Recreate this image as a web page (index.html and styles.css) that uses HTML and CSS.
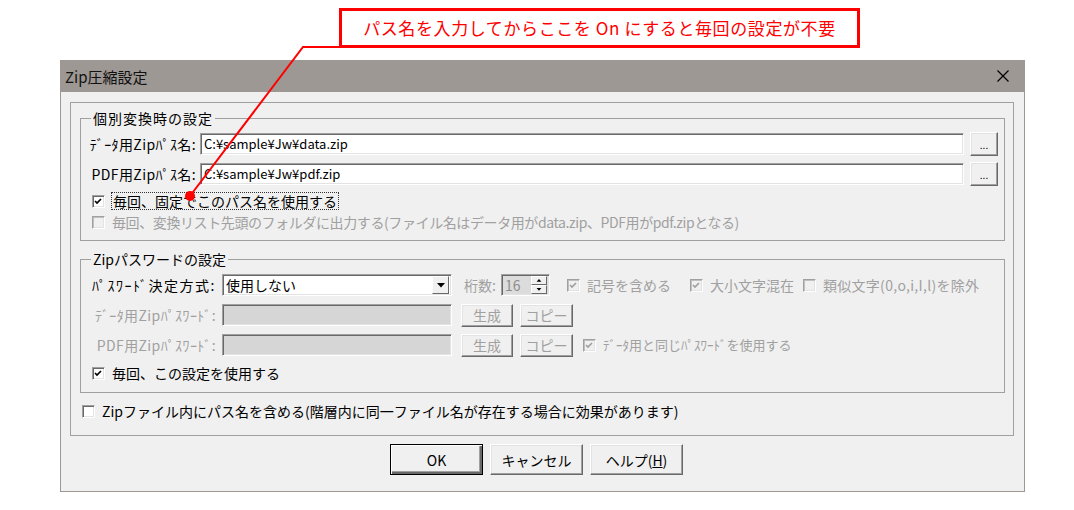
FILE: index.html
```html
<!DOCTYPE html>
<html lang="ja">
<head>
    <meta charset="UTF-8">
    <title>Zip圧縮設定</title>
    <link rel="stylesheet" href="styles.css">
</head>
<body>
<div class="page">
    <div class="note-row">
        <div class="note">パス名を入力してからここを On にすると毎回の設定が不要</div>
    </div>

    <div class="dialog">
        <div class="titlebar">
            <span>Zip圧縮設定</span>
            <svg class="close" viewBox="0 0 12 12"><path d="M0.5 0.5L11.5 11.5M11.5 0.5L0.5 11.5"/></svg>
        </div>

        <div class="body">
            <div class="frame">
                <fieldset class="group g-path">
                    <legend>個別変換時の設定</legend>
                    <div class="content">
                        <div class="row">
                            <span class="lbl">ﾃﾞｰﾀ用Zipﾊﾟｽ名:</span>
                            <div class="edit path">C:¥sample¥Jw¥data.zip</div>
                            <button class="btn browse">...</button>
                        </div>
                        <div class="row">
                            <span class="lbl">PDF用Zipﾊﾟｽ名:</span>
                            <div class="edit path">C:¥sample¥Jw¥pdf.zip</div>
                            <button class="btn browse">...</button>
                        </div>
                        <div class="check first">
                            <span class="cb"><svg viewBox="0 0 11 11"><path d="M2 5l2 2 4-4"/></svg></span>
                            <span class="cb-text focus">毎回、固定でこのパス名を使用する</span>
                        </div>
                        <div class="check second off">
                            <span class="cb"></span>
                            <span class="cb-text">毎回、変換リスト先頭のフォルダに出力する(ファイル名はデータ用がdata.zip、PDF用がpdf.zipとなる)</span>
                        </div>
                    </div>
                </fieldset>

                <fieldset class="group g-pass">
                    <legend>Zipパスワードの設定</legend>
                    <div class="content">
                        <div class="row">
                            <span class="lbl mode">ﾊﾟｽﾜｰﾄﾞ決定方式:</span>
                            <div class="edit select">
                                <span>使用しない</span>
                                <span class="drop"><svg viewBox="0 0 8 5"><path d="M0 0h8L4 4.5z"/></svg></span>
                            </div>
                            <span class="digits off">桁数:</span>
                            <div class="edit spin">
                                <span>16</span>
                                <span class="arrows">
                                    <svg viewBox="0 0 8 5"><path d="M0 4.5h8L4 0z"/></svg>
                                    <svg viewBox="0 0 8 5"><path d="M0 0h8L4 4.5z"/></svg>
                                </span>
                            </div>
                            <div class="check inline off sym">
                                <span class="cb"><svg viewBox="0 0 11 11"><path d="M2 5l2 2 4-4"/></svg></span>
                                <span class="cb-text">記号を含める</span>
                            </div>
                            <div class="check inline off mix">
                                <span class="cb"><svg viewBox="0 0 11 11"><path d="M2 5l2 2 4-4"/></svg></span>
                                <span class="cb-text">大小文字混在</span>
                            </div>
                            <div class="check inline off like">
                                <span class="cb"></span>
                                <span class="cb-text">類似文字(0,o,i,I,l)を除外</span>
                            </div>
                        </div>
                        <div class="row pw off">
                            <span class="lbl">ﾃﾞｰﾀ用Zipﾊﾟｽﾜｰﾄﾞ:</span>
                            <div class="edit blank"></div>
                            <button class="btn small make">生成</button>
                            <button class="btn small copy">コピー</button>
                        </div>
                        <div class="row pw off">
                            <span class="lbl">PDF用Zipﾊﾟｽﾜｰﾄﾞ:</span>
                            <div class="edit blank"></div>
                            <button class="btn small make">生成</button>
                            <button class="btn small copy">コピー</button>
                            <div class="check inline same">
                                <span class="cb"><svg viewBox="0 0 11 11"><path d="M2 5l2 2 4-4"/></svg></span>
                                <span class="cb-text">ﾃﾞｰﾀ用と同じﾊﾟｽﾜｰﾄﾞを使用する</span>
                            </div>
                        </div>
                        <div class="check every">
                            <span class="cb"><svg viewBox="0 0 11 11"><path d="M2 5l2 2 4-4"/></svg></span>
                            <span class="cb-text">毎回、この設定を使用する</span>
                        </div>
                    </div>
                </fieldset>

                <div class="check zip">
                    <span class="cb"></span>
                    <span class="cb-text">Zipファイル内にパス名を含める(階層内に同一ファイル名が存在する場合に効果があります)</span>
                </div>
            </div>

            <div class="actions">
                <button class="btn act ok">OK</button>
                <button class="btn act">キャンセル</button>
                <button class="btn act">ヘルプ(<u>H</u>)</button>
            </div>
        </div>
    </div>

    <svg class="pointer" viewBox="0 0 1074 510">
        <polyline points="340,47 303,47 190,196"/>
        <circle cx="190" cy="196" r="5"/>
    </svg>
</div>
</body>
</html>
```

FILE: styles.css
```css
* {
    box-sizing: border-box;
}

body {
    margin: 0;
    background: #fff;
    color: #000;
    font-family: "Noto Sans CJK JP", "Noto Sans", sans-serif;
    font-size: 14px;
}

.page {
    position: relative;
    width: 1074px;
    height: 510px;
}

/* callout */
.note-row {
    height: 60px;
    padding-top: 8px;
}

.note {
    margin-left: 339px;
    width: 521px;
    height: 40px;
    border: 3px solid #f00;
    color: #f00;
    font-size: 17px;
    letter-spacing: 0.6px;
    line-height: 33px;
    text-align: center;
}

.pointer {
    position: absolute;
    left: 0;
    top: 0;
    width: 1074px;
    height: 510px;
    pointer-events: none;
}

.pointer polyline {
    fill: none;
    stroke: #f00;
    stroke-width: 2;
}

.pointer circle {
    fill: #f00;
}

/* window */
.dialog {
    margin-left: 60px;
    width: 965px;
    height: 432px;
    background: #f0f0f0;
    border: 1px solid #9d9893;
    border-top: 0;
}

.titlebar {
    height: 32px;
    background: #9d9893;
    display: flex;
    align-items: center;
    justify-content: space-between;
    padding: 0 15px 0 4px;
    font-size: 15px;
    color: #111;
}

.close {
    width: 12px;
    height: 12px;
}

.close path {
    stroke: #000;
    stroke-width: 1.2;
}

.body {
    padding: 10px 0 0 9px;
}

.frame {
    width: 944px;
    height: 334px;
    border: 1px solid #a0a0a0;
    padding: 7px 8px 0 9px;
}

.group {
    margin: 0;
    padding: 0;
    width: 925px;
    border: 1px solid #a0a0a0;
}

.group legend {
    margin-left: 10px;
    padding: 0 2px;
    line-height: 16px;
}

.g-path legend {
    letter-spacing: 1px;
}

.g-path {
    height: 131px;
}

.g-pass {
    height: 142px;
    margin-top: 10px;
}

.content {
    padding: 6px 0 0 7px;
}

.row {
    display: flex;
    align-items: center;
    height: 24px;
}

.row + .row {
    margin-top: 6px;
}

.lbl {
    line-height: 16px;
    text-align: right;
    white-space: nowrap;
    letter-spacing: 0.4px;
}

.g-path .lbl {
    width: 108px;
    margin-right: 4px;
}

.g-pass .lbl {
    width: 128px;
    margin-right: 6px;
}

.lbl.mode {
    letter-spacing: 1.5px;
}

.off,
.off .cb-text {
    color: #a0a0a0;
}

/* sunken fields */
.edit {
    height: 22px;
    background: #fff;
    border: 1px solid;
    border-color: #a0a0a0 #fff #fff #a0a0a0;
    box-shadow: inset 1px 1px #696969, inset -1px -1px #e3e3e3;
    padding: 0 3px;
    font-size: 13px;
    line-height: 20px;
    white-space: nowrap;
}

.path {
    width: 764px;
}

.select {
    width: 230px;
    display: flex;
    align-items: center;
    justify-content: space-between;
    padding-right: 2px;
    font-size: 14px;
}

.drop,
.arrows svg {
    display: flex;
    align-items: center;
    justify-content: center;
    background: #f0f0f0;
    border: 1px solid;
    border-color: #fff #696969 #696969 #fff;
}

.drop {
    width: 17px;
    height: 18px;
}

.drop svg {
    width: 8px;
    height: 5px;
}

.digits {
    margin-left: 12px;
    margin-right: 5px;
}

.spin {
    width: 49px;
    display: flex;
    align-items: center;
    justify-content: space-between;
    padding-right: 2px;
    background: #dcdcdc;
    color: #8c8c8c;
    font-size: 14px;
}

.arrows {
    display: flex;
    flex-direction: column;
}

.arrows svg {
    width: 16px;
    height: 9px;
    padding: 2px 3px;
}

.blank {
    width: 230px;
    background: #d6d6d6;
}

/* raised buttons */
.btn {
    font-family: inherit;
    font-size: 14px;
    color: #000;
    background: #f0f0f0;
    border: 1px solid;
    border-color: #fff #696969 #696969 #fff;
    box-shadow: inset -1px -1px #a0a0a0, inset 1px 1px #e3e3e3;
    padding: 0;
}

.browse {
    width: 28px;
    height: 24px;
    margin-left: 6px;
    font-size: 10px;
}

.small {
    height: 23px;
    color: #a0a0a0;
}

.make {
    width: 52px;
    margin-left: 9px;
}

.copy {
    width: 53px;
    margin-left: 7px;
}

/* check boxes */
.check {
    display: flex;
    align-items: center;
    height: 16px;
    margin-left: 4px;
}

.cb {
    display: flex;
    width: 13px;
    height: 13px;
    flex: none;
    background: #fff;
    border: 1px solid;
    border-color: #a0a0a0 #fff #fff #a0a0a0;
    box-shadow: inset 1px 1px #696969, inset -1px -1px #e3e3e3;
}

.cb svg {
    width: 11px;
    height: 11px;
}

.cb path {
    fill: none;
    stroke: #000;
    stroke-width: 1.7;
}

.off .cb {
    background: #f0f0f0;
    box-shadow: inset 1px 1px #c0c0c0, inset -1px -1px #e3e3e3;
}

.off .cb path {
    stroke: #a0a0a0;
}

.cb-text {
    margin-left: 6px;
    padding: 0 1px;
    line-height: 16px;
    white-space: nowrap;
}

.focus {
    border: 1px dotted #333;
    line-height: 16px;
}

.check.first {
    margin-top: 7px;
}

.check.second {
    margin-top: 5px;
}

.check.second .cb-text {
    letter-spacing: -0.4px;
}

.sym {
    margin-left: 17px;
}

.mix {
    margin-left: 18px;
}

.like {
    margin-left: 8px;
}

.like .cb-text {
    letter-spacing: 0.3px;
}

.same {
    margin-left: 10px;
}

.same .cb-text {
    font-size: 13px;
}

.check.every {
    margin-top: 8px;
}

.check.zip {
    margin: 10px 0 0 2px;
}

/* bottom buttons */
.actions {
    display: flex;
    gap: 7px;
    margin-top: 8px;
    padding-left: 320px;
}

.act {
    width: 93px;
    height: 31px;
}

.ok {
    border: 1px solid #000;
    box-shadow: inset 1px 1px #fff, inset -2px -2px #696969, inset -3px -3px #a0a0a0;
}
```
